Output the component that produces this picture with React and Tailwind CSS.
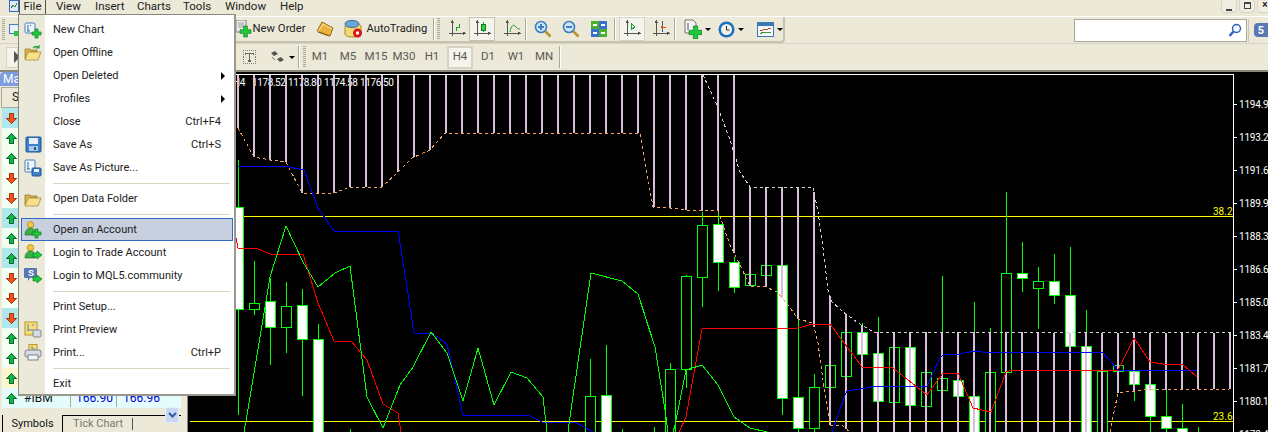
import React from "react";

const F = { fontFamily: 'Roboto,"Noto Sans",sans-serif' };

const Up = () => (
  <svg width="11" height="11" viewBox="0 0 11 11" shapeRendering="crispEdges"><path d="M5.5 .5 10.5 5.5H7.5V10.5H3.5V5.5H.5Z" fill="#16b24a" stroke="#0b6b2c" /></svg>
);
const Down = () => (
  <svg width="11" height="11" viewBox="0 0 11 11" shapeRendering="crispEdges"><path d="M5.5 10.5 10.5 5.5H7.5V.5H3.5V5.5H.5Z" fill="#f2531f" stroke="#a93412" /></svg>
);
const Plus = ({ x = 8, y = 8, s = 8 }) => {
  const a = s / 3;
  return <path d={`M${x + a} ${y}h${a}v${a}h${a}v${a}h${-a}v${a}h${-a}v${-a}h${-a}v${-a}h${a}z`} fill="#22c83c" stroke="#0f7d25" strokeWidth=".7" />;
};
const Sv = ({ w = 18, h = 18, children, vb }) => <svg width={w} height={h} viewBox={vb || `0 0 ${w} ${h}`}>{children}</svg>;

const IcNewChart = () => (
  <Sv><rect x="1" y="2" width="10" height="10" rx="1.5" fill="#eef4fb" stroke="#4a7cb8" /><path d="M4 4v6M6 10H3M7 4l-1 1" stroke="#2a6a9a" fill="none" /><Plus x={8} y={8} s={9} /></Sv>
);
const IcFolderOpen = ({ arrow }) => (
  <Sv>
    <path d="M1 5h5l1 1h6v2H5L2 15H1z" fill="#d9b64a" stroke="#8a6d1e" strokeWidth=".7" />
    <path d="M4 8h13l-3 8H1z" fill="#f8e08a" stroke="#a5832c" strokeWidth=".7" />
    {arrow && <path d="M9 4c2-2 4-2 6 0M15 1v3h-3" stroke="#2a9a3a" strokeWidth="1.2" fill="none" />}
  </Sv>
);
const IcFloppy = () => (
  <Sv w={17} h={17}><rect x="1" y="1" width="15" height="15" rx="1" fill="#3d7fc9" stroke="#1f558f" /><rect x="4" y="2" width="9" height="6" fill="#e8eef6" /><rect x="4" y="10" width="9" height="5" fill="#a9c6e6" /><rect x="9" y="11" width="2" height="3" fill="#1f558f" /></Sv>
);
const IcSavePic = () => (
  <Sv><rect x="1" y="1" width="10" height="12" rx="1" fill="#eef4fb" stroke="#4a7cb8" /><path d="M4 3v7M6 10H3" stroke="#2a6a9a" fill="none" /><rect x="8" y="9" width="9" height="8" rx="1" fill="#3d7fc9" stroke="#1f558f" /><rect x="10" y="10" width="5" height="3" fill="#e8eef6" /></Sv>
);
const IcUser = ({ kind }) => (
  <Sv w={18} h={18}>
    <circle cx="6.5" cy="3.8" r="3.2" fill="#f4c93f" stroke="#a57d16" strokeWidth=".7" />
    <path d="M1 14c0-5 3-7 5.500-7s5 2 5 7z" fill="#3dae45" stroke="#1e7a2c" strokeWidth=".7" />
    {kind === "plus" ? <Plus x={8} y={8} s={9} /> : <path d="M9 9h4V7l5 4-5 4v-2H9z" fill="#22c83c" stroke="#0f7d25" strokeWidth=".7" />}
  </Sv>
);
const IcMql = () => (
  <Sv w={18} h={18}>
    <path d="M1 1h11a1 1 0 0 1 1 1v8a1 1 0 0 1-1 1H6l-2 3v-3H1a1 1 0 0 1-1-1V2a1 1 0 0 1 1-1z" fill="#5a78b4" />
    <text x="4" y="9" fontSize="9" fontWeight="700" fill="#fff" fontFamily="Liberation Sans">S</text>
    <path d="M9 10h4V8l5 4-5 4v-2H9z" fill="#22c83c" stroke="#0f7d25" strokeWidth=".7" />
  </Sv>
);
const IcPreview = () => (
  <Sv><rect x="1" y="1" width="12" height="13" fill="#f8dc78" stroke="#b8962c" /><path d="M4 3v7M4 9h6M8 4h2" stroke="#5a88b8" fill="none" /><rect x="9" y="9" width="8" height="7" rx="1.500" fill="#d8dce2" stroke="#7b8490" /></Sv>
);
const IcPrint = () => (
  <Sv><rect x="5" y="0.500" width="8" height="7" fill="#f8dc78" stroke="#b8962c" /><path d="M8 2v3h3" stroke="#5a88b8" fill="none" /><rect x="1" y="6" width="16" height="7" rx="2" fill="#d8dce2" stroke="#7b8490" /><rect x="4" y="11" width="10" height="5" fill="#f4f4f4" stroke="#7b8490" /></Sv>
);

const Axes = ({ children }) => (
  <svg width="18" height="18" viewBox="0 0 18 18" shapeRendering="crispEdges">
    <path d="M4.500 1v15M1 13.500h16M3 3l1.500-2L6 3M15 12l2 1.500-2 1.500" stroke="#555" fill="none" />
    {children}
  </svg>
);
const Glass = ({ plus }) => (
  <svg width="18" height="18" viewBox="0 0 18 18">
    <path d="M11 11l5.500 5.500" stroke="#b8942c" strokeWidth="2.500" />
    <circle cx="7" cy="7" r="5.500" fill="#cfe6f8" stroke="#3b7fbe" strokeWidth="1.600" />
    <path d={plus ? "M4 7h6M7 4v6" : "M4 7h6"} stroke="#3b7fbe" strokeWidth="2" />
  </svg>
);
const Tile = () => (
  <svg width="16" height="16" viewBox="0 0 16 16" shapeRendering="crispEdges">
    <rect width="8" height="8" fill="#4caf30" /><rect x="8" width="8" height="8" fill="#3a6fd0" /><rect y="8" width="8" height="8" fill="#3a6fd0" /><rect x="8" y="8" width="8" height="8" fill="#4caf30" />
    <path d="M2 4h4M10 4h4M2 12h4M10 12h4" stroke="#fff" strokeWidth="2" />
  </svg>
);
const Caret = () => <span className="ml-[3px] w-0 h-0 border-x-[3px] border-x-transparent border-t-[3px] border-t-black" />;
const Sep = () => <div className="w-px h-[22px] bg-[#aca899] border-r border-white box-content" />;
const Grip = () => <div className="w-[3px] h-[22px] bg-[repeating-linear-gradient(to_bottom,#aca899_0,#aca899_1px,transparent_1px,transparent_2px)]" />;

function Toolbar1() {
  return (
    <div className="h-[27px] flex items-center relative border-t border-t-white">
      <div className="flex items-center pl-[2px] w-[235px]">
        <Grip />
        <div className="ml-[4px]"><svg width="12" height="12"><rect x=".5" y=".5" width="10" height="9" fill="#e8f0fa" stroke="#4a7cb8" /><rect x="5" y="7" width="7" height="5" fill="#22c83c" /></svg></div>
      </div>
      <div className="h-[26px] flex items-center w-[552px] border-r-2 border-b-2 border-[#c5c2b0] rounded-br-sm">
        <svg width="17" height="18" viewBox="0 0 17 18"><rect x="1" y="0" width="10" height="12" fill="#f0f0f0" stroke="#777" /><path d="M3 3h6M3 5h6M3 7h6" stroke="#999" /><Plus x={5} y={6} s={11} /></svg>
        <span className="ml-[1px] text-[11.3px] text-[#222] w-[63px]">New Order</span>
        <svg width="18" height="16" viewBox="0 0 18 16"><path d="M1 10 6 1l11 6-3 8z" fill="#e8b23c" stroke="#9a6a14" /><path d="M2 11l5-8 9 5" fill="none" stroke="#f8e8a0" /><path d="M2 11l11 4" stroke="#8a5a14" /></svg>
        <span className="w-[10px]" />
        <svg width="19" height="20" viewBox="0 0 19 20"><path d="M1 8c0-3 4-4 8-4s8 1 8 4v7c0 2-4 3-8 3s-8-1-8-3z" fill="#f4d870" stroke="#a58a2c" /><ellipse cx="8" cy="5" rx="7" ry="3.500" fill="#6aa6d8" stroke="#33689c" /><circle cx="13.500" cy="14" r="4.500" fill="#d81818" /><rect x="12" y="12.500" width="3" height="3" fill="#fff" /></svg>
        <span className="ml-[4px] text-[11.2px] text-[#222] w-[60px]">AutoTrading</span>
        <span className="w-[6px]" /><Sep /><span className="w-[2px]" /><Grip />
        <span className="w-[8px]" />
        <Axes><path d="M8 11V7h3V4" stroke="#16a02c" fill="none" /></Axes>
        <div className="ml-[3px] w-[26px] h-[24px] flex items-center justify-center bg-[#f4f3ec] border border-white outline outline-1 outline-[#c5c2b0] -outline-offset-1">
          <Axes><path d="M10.500 2v10" stroke="#16a02c" /><rect x="8.500" y="4.500" width="4" height="6" fill="#2fd24a" stroke="#0f7d25" /></Axes>
        </div>
        <span className="w-[8px]" />
        <Axes><path d="M7 12C8 6 10 4 12 6s3 3 5 3" stroke="#16a02c" fill="none" shapeRendering="auto" /></Axes>
        <span className="w-[4px]" /><Sep /><span className="w-[7px]" />
        <Glass plus /><span className="w-[10px]" /><Glass /><span className="w-[11px]" /><Tile />
        <span className="w-[7px]" /><Sep /><span className="w-[3px]" />
        <div className="w-[26px] h-[24px] flex items-center justify-center bg-[#f4f3ec] border border-[#d6d3c4]">
          <Axes><path d="M8 3v7l4-3z" fill="none" stroke="#16a02c" /></Axes>
        </div>
        <span className="w-[7px]" />
        <Axes><path d="M10.500 1v11" stroke="#2a5a9a" /><path d="M14 7h-5M11 5 9 7l2 2" stroke="#d84a14" fill="none" /></Axes>
        <span className="w-[4px]" /><Sep /><span className="w-[8px]" />
        <svg width="18" height="20" viewBox="0 0 18 20"><path d="M1 1h8l3 3v10H1z" fill="#f4f4f4" stroke="#777" /><path d="M4 4v7" stroke="#555" /><Plus x={5} y={7} s={13} /></svg>
        <Caret /><span className="w-[7px]" />
        <svg width="17" height="17" viewBox="0 0 17 17"><circle cx="8.500" cy="8.500" r="8" fill="#1b6fc0" /><circle cx="8.500" cy="8.500" r="5.500" fill="#f2f2ea" /><path d="M8.500 5v4h3" stroke="#333" fill="none" /></svg>
        <Caret /><span className="w-[13px]" />
        <svg width="17" height="15" viewBox="0 0 17 15" shapeRendering="crispEdges"><rect width="16" height="14" x=".5" y=".5" fill="#f4f8fc" stroke="#3c78b4" /><rect x="1" y="1" width="15" height="3" fill="#3c78b4" /><path d="M3 12l3-2 2 1 3-1 3 1" stroke="#3a9a3a" fill="none" /><path d="M3 8h3l2-1h3l3-1" stroke="#b84a14" fill="none" /></svg>
        <Caret />
      </div>
      <div className="ml-[289px] w-[173px] h-[23px] bg-white border border-[#aca899] flex items-center justify-end pr-[4px]">
        <svg width="14" height="15" viewBox="0 0 14 15"><circle cx="8.500" cy="5.500" r="4" fill="#f4f8ff" stroke="#2f62c0" strokeWidth="1.500" /><path d="M5.500 8.500 1.500 13" stroke="#2f62c0" strokeWidth="2.500" /></svg>
      </div>
      <div className="ml-[1px] pl-[5px] border-l border-[#c9c6b6] h-[23px] flex items-center">
        <div className="w-[14px] h-[14px] bg-[#5a78b4] rounded-l-sm text-white text-[11px] font-bold flex items-center justify-center leading-none">5</div>
      </div>
    </div>
  );
}

function Toolbar2() {
  const tf = ["M1", "M5", "M15", "M30", "H1", "H4", "D1", "W1", "MN"];
  return (
    <div className="h-[27px] flex items-center border-t border-[#d6d3c4]">
      <div className="w-[243px] pl-[6px]"><div className="w-[12px] h-[21px] bg-[#f4f3ec] border border-[#d6d3c4] flex items-center"><div className="ml-[7px] w-0 h-0 border-y-[6px] border-y-transparent border-l-[6px] border-l-[#555]" /></div></div>
      <svg width="13" height="14" viewBox="0 0 14 14" shapeRendering="crispEdges"><rect x=".5" y=".5" width="13" height="13" fill="none" stroke="#777" strokeDasharray="1 1" /><path d="M3 3h8v2M7 3v9M5 11.500h4M3 3v2" stroke="#666" fill="none" strokeWidth="1.500" /></svg>
      <span className="w-[14px]" />
      <svg width="16" height="14" viewBox="0 0 16 14"><path d="M1 3l4-2 3 3-4 2zM7 9l4-2 3 3-4 2z" fill="#555" /><path d="M2 7l3 3" stroke="#777" /></svg>
      <Caret />
      <span className="w-[3px]" /><Sep /><span className="w-[3px]" /><Grip />
      <div className="flex items-center text-[11.5px] text-[#5a5a52]">
        {tf.map((t) => (
          <div key={t} className={t === "H4" ? "mx-[1px] w-[26px] h-[23px] flex items-center justify-center bg-[#f4f3ec] border-2 border-[#d6d3c4]" : "w-[28px] h-[23px] flex items-center justify-center"}>{t}</div>
        ))}
      </div>
      <span className="w-[1px]" /><Sep />
    </div>
  );
}

const rows = [
  ["d", "#aee8ea"], ["u", "#f0fff0"], ["u", "#f2fff2"], ["d", "#f2fff2"], ["d", "#f2fff2"], ["u", "#aee8ea"], ["u", "#f0fff0"], ["u", "#aee8ea"], ["d", "#f2fff2"], ["d", "#f2fff2"], ["d", "#aee8ea"], ["u", "#f2fff2"], ["u", "#f2fff2"], ["u", "#fdf7d0"], ["u", "#e4fcfc"],
];

function LeftPanel() {
  return (
    <div className="w-[187px] shrink-0 flex flex-col h-full">
      <div className="h-[14px] bg-[#7d9be0] text-white text-[12px] leading-[14px] pl-[3px] rounded-tl-sm">Ma</div>
      <div className="ml-[1px] mt-[1px] w-[180px] h-[21px] border border-[#aca899] bg-[#ece9d8] text-[12px] pl-[10px] text-[#222] leading-[19px]">S</div>
      <div className="ml-[2px] w-[179px] relative flex flex-col">
        {rows.map(([d, c], i) => (
          <div key={i} className="h-[20px] shrink-0 flex items-center text-[12px] text-[#0000e0]" style={{ backgroundColor: c }}>
            <span className="ml-[4px] w-[12px] flex">{d === "u" ? <Up /> : <Down />}</span>
            {i === 14 && (
              <>
                <span className="ml-[6px] w-[47px] text-[#111] border-r border-[#aca899]">#IBM</span>
                <span className="w-[46px] text-right pr-[3px] border-r border-[#aca899]">166.90</span>
                <span className="w-[46px] text-right pr-[3px]">166.96</span>
              </>
            )}
          </div>
        ))}
        <div className="absolute right-[2px] bottom-[-15px] w-[14px] h-[16px] bg-[#c8d8f4] border border-[#e8eefc] flex items-center justify-center">
          <svg width="9" height="7" viewBox="0 0 9 7"><path d="M1 1l3.500 3.500L8 1" fill="none" stroke="#3a5a9a" strokeWidth="2" /></svg>
        </div>
      </div>
      <div className="mt-auto ml-[2px] h-[17px] flex text-[11px] border-t border-black w-[179px]">
        <div className="w-[61px] text-center bg-[#ece9d8] text-[#111] border-l border-r border-black -mt-px leading-[17px]">Symbols</div>
        <div className="pl-[10px] mt-[2px] w-[70px] text-[#7a7a70] border-r border-[#555] leading-[12px] h-[12px]">Tick Chart</div>
      </div>
    </div>
  );
}

const candles = [
  [238, 160, 415, 207, 309, 1], [254, 261, 315, 303, 309, 0], [270, 278, 365, 301, 327, 1], [286, 282, 353, 306, 327, 0], [302, 289, 396, 305, 339, 1], [318, 324, 440, 339, 440, 1],
  [350, 429, 440, 440, 440, 0], [590, 359, 440, 396, 440, 0], [606, 345, 440, 395, 440, 1], [622, 429, 440, 440, 440, 0], [654, 427, 440, 440, 440, 0], [670, 363, 440, 369, 440, 0],
  [686, 275, 388, 276, 369, 0], [702, 212, 307, 225, 277, 0], [718, 212, 291, 224, 262, 1], [734, 257, 293, 262, 287, 1], [750, 274, 285, 274, 285, 0], [766, 265, 275, 265, 275, 0],
  [782, 265, 415, 265, 398, 1], [798, 320, 440, 397, 428, 1], [814, 374, 440, 387, 428, 0], [830, 365, 387, 365, 387, 0], [846, 332, 376, 332, 376, 0], [862, 323, 354, 332, 354, 1],
  [878, 317, 401, 353, 401, 1], [894, 347, 402, 347, 402, 0], [910, 347, 405, 347, 405, 1], [926, 372, 406, 372, 406, 0], [942, 276, 390, 378, 390, 0], [958, 380, 396, 380, 396, 1],
  [974, 302, 440, 396, 440, 1], [990, 328, 440, 372, 440, 0], [1006, 192, 372, 273, 372, 0], [1022, 242, 292, 273, 278, 1], [1038, 267, 329, 281, 288, 0], [1054, 254, 304, 281, 295, 1],
  [1070, 247, 346, 295, 346, 1], [1086, 310, 440, 346, 440, 1], [1102, 371, 440, 371, 440, 0], [1118, 365, 371, 365, 371, 0], [1134, 371, 401, 371, 384, 1], [1150, 384, 440, 384, 416, 1],
  [1166, 390, 440, 416, 428, 1], [1182, 404, 440, 428, 440, 1], [1198, 427, 440, 440, 440, 0],
];
const orange = [[238,128],[254,157],[270,160],[286,162],[302,193],[318,194],[334,193],[350,187],[382,187],[398,172],[412,158],[430,150],[445,133],[640,133],[653,207],[670,208],[686,210],[718,211],[723,225],[730,245],[740,265],[750,286],[766,287],[777,292],[788,305],[798,319],[813,323],[818,343],[823,380],[830,425],[843,426],[850,432]];
const orange2 = [[1110,432],[1113,417],[1118,393],[1143,390],[1230,389]];
const pale = [[703,75],[717,105],[730,140],[740,172],[750,187],[813,187],[818,212],[823,248],[828,290],[832,302],[843,312],[857,322],[873,332],[1232,333]];
const blue = [[238,166],[285,166],[304,170],[318,208],[334,231],[398,231],[407,287],[414,333],[432,333],[447,344],[463,415],[528,415],[542,422],[575,422],[593,432]];
const blue2 = [[832,432],[845,395],[847,391],[860,389],[877,386],[927,386],[940,358],[943,355],[960,354],[973,351],[983,352],[1102,352],[1118,370],[1197,370]];
const red = [[236,238],[238,248],[256,248],[270,254],[303,254],[318,303],[334,341],[351,341],[367,360],[383,404],[398,413],[401,432]];
const red2 = [[679,432],[686,417],[702,329],[798,328],[813,324],[830,324],[862,367],[893,368],[927,395],[943,373],[958,373],[973,408],[991,412],[1006,372],[1012,370],[1118,370],[1134,338],[1150,362],[1163,364],[1182,364],[1197,377]];
const green = [[244,432],[247,415],[270,277],[286,226],[303,262],[318,287],[335,273],[350,266],[367,397],[383,428],[400,385],[413,367],[431,332],[447,353],[463,401],[478,348],[494,405],[511,372],[527,378],[543,397],[547,432]];
const green2 = [[568,432],[570,417],[591,273],[622,281],[638,294],[650,332]];
const green3 = [[640,300],[655,347],[665,410],[668,432]];
const green4 = [[673,432],[675,425],[686,370],[702,365],[718,385],[734,417],[750,428],[767,432]];
const pts = (a) => a.map(([x, y]) => `${x},${y}`).join(" ");
const bars = [];
for (let x = 238; x <= 1230; x += 16) {
  const yAt = (arr) => {
    for (let i = 0; i < arr.length - 1; i++) if (x >= arr[i][0] && x <= arr[i + 1][0]) { const [a, b] = [arr[i], arr[i + 1]]; return a[1] + ((b[1] - a[1]) * (x - a[0])) / (b[0] - a[0]); }
    return null;
  };
  let top = x <= 718 ? 75 : yAt(pale);
  if (x === 734) top = 75;
  let bot = x <= 850 ? yAt(orange) : x >= 1118 ? yAt(orange2) : 432;
  if (bot == null) bot = 432;
  bars.push([x, top, bot]);
}
const prices = ["1194.90", "1193.25", "1191.60", "1189.95", "1188.30", "1186.65", "1185.00", "1183.40", "1181.75", "1180.10", "1178.45"];

function Chart() {
  return (
    <div className="flex-1 h-full bg-black">
      <svg width="1080" height="360" viewBox="188 72 1080 360" shapeRendering="crispEdges" className="block" style={F}>
        <path d="M188 74.500H1233.500V433" stroke="#fff" fill="none" />
        {[["H4", 233], ["1178.52", 252], ["1178.80", 288], ["1174.58", 324], ["1176.50", 360]].map(([t, x]) => (
          <text key={t} x={x} y="86" fontSize="10" letterSpacing="-0.4" fill="#fff">{t}</text>
        ))}
        <path d="M190 216.500H1233M190 421.500H1233" stroke="#ffff00" />
        <text x="1213" y="215" fontSize="10" fill="#ffff00">38.2</text>
        <text x="1213" y="420" fontSize="10" fill="#ffff00">23.6</text>
        {candles.map(([x, wt, wb, bt, bb, fill]) => (
          <g key={x}>
            <path d={`M${x + 0.5} ${wt}V${wb}`} stroke="#00ff00" />
            {bb > bt && <rect x={x - 5 + 0.5} y={bt + 0.5} width={10} height={bb - bt} fill={fill ? "#fff" : "#000"} stroke="#00ff00" />}
          </g>
        ))}
        {bars.map(([x, t, b]) => <rect key={x} x={x - 1} y={t} width="2" height={b - t} fill="#d8bfd8" />)}
        <polyline points={pts(orange)} fill="none" stroke="#f4a460" strokeDasharray="3 3" />
        <polyline points={pts(orange2)} fill="none" stroke="#f4a460" strokeDasharray="3 3" />
        <polyline points={pts(pale)} fill="none" stroke="#d8d0d8" strokeDasharray="3 3" />
        {[blue, blue2].map((l, i) => <polyline key={i} points={pts(l)} fill="none" stroke="#0000ff" />)}
        {[red, red2].map((l, i) => <polyline key={i} points={pts(l)} fill="none" stroke="#ff0000" />)}
        {[green, green2, green3, green4].map((l, i) => <polyline key={i} points={pts(l)} fill="none" stroke="#00ff00" />)}
        {prices.map((p, i) => (
          <g key={p}>
            <path d={`M1234 ${104 + i * 33}h3`} stroke="#fff" />
            <text x="1239" y={108 + i * 33} fontSize="10" letterSpacing="-0.2" fill="#fff">{p}</text>
          </g>
        ))}
      </svg>
    </div>
  );
}

const Sub = () => <span className="ml-auto mr-[8px] w-0 h-0 border-y-[4px] border-y-transparent border-l-[4px] border-l-black" />;
const Item = ({ icon, label, sc, sub, active }) => (
  <div className={active ? "h-[23px] flex items-center bg-[#c8d0e0] border border-[#316ac5] relative" : "h-[23px] flex items-center relative"}>
    <span className={active ? "w-[24px] mr-[8px] flex items-center justify-center shrink-0 -ml-[1px]" : "w-[24px] mr-[8px] flex items-center justify-center shrink-0"}>{icon}</span>
    <span className="text-[#222] pt-[2px]">{label}</span>
    {sc && <span className="ml-auto mr-[12px] text-[#222] pt-[2px]">{sc}</span>}
    {sub && <Sub />}
  </div>
);
const MSep = () => <div className="h-[8px] flex items-center pl-[32px] pr-[3px]"><div className="h-px w-full bg-[#d8d5c4]" /></div>;

function FileMenu() {
  return (
    <div className="absolute left-[18px] top-[14px] w-[218px] h-[382px] bg-white border border-[#8a887c] border-r-2 border-b-2 border-r-[#9a988c] border-b-[#9a988c] text-[11px] pl-[2px] pr-[1px] pt-[3px] bg-[linear-gradient(to_right,#ebe9d9_26px,#fff_26px)]">
      <Item icon={<IcNewChart />} label="New Chart" />
      <Item icon={<IcFolderOpen arrow />} label="Open Offline" />
      <Item label="Open Deleted" sub />
      <Item label="Profiles" sub />
      <Item label="Close" sc="Ctrl+F4" />
      <Item icon={<IcFloppy />} label="Save As" sc="Ctrl+S" />
      <Item icon={<IcSavePic />} label="Save As Picture..." />
      <MSep />
      <Item icon={<IcFolderOpen />} label="Open Data Folder" />
      <MSep />
      <Item icon={<IcUser kind="plus" />} label="Open an Account" active />
      <Item icon={<IcUser />} label="Login to Trade Account" />
      <Item icon={<IcMql />} label="Login to MQL5.community" />
      <MSep />
      <Item label="Print Setup..." />
      <Item icon={<IcPreview />} label="Print Preview" />
      <Item icon={<IcPrint />} label="Print..." sc="Ctrl+P" />
      <MSep />
      <Item label="Exit" />
    </div>
  );
}

export default function App() {
  const menus = [["View", 39], ["Insert", 42], ["Charts", 46], ["Tools", 42], ["Window", 55], ["Help", 40]];
  return (
    <div className="relative w-[1268px] h-[432px] overflow-hidden bg-[#ece9d8] flex flex-col" style={F}>
      <div className="h-[16px] shrink-0 flex items-start text-[11.5px] leading-[12px] text-[#222] relative">
        <div className="w-[19px] pl-[9px]"><svg width="10" height="12" viewBox="0 0 10 12" shapeRendering="crispEdges"><rect x=".5" y="0" width="9" height="11" fill="#dfe9fa" stroke="#3a6ac0" /><path d="M2 8l2-3 2 2 2-4" stroke="#3a8a3a" fill="none" /></svg></div>
        <div className="w-[27px] h-[15px] border-x border-b border-x-[#55534a] border-b-[#55534a] text-center">File</div>
        <div className="flex pl-[10px]">{menus.map(([m, w]) => <span key={m} style={{ width: w }}>{m}</span>)}</div>
        <div className="ml-auto flex gap-[2px] -mr-[5px] -mt-[2px]">
          <div className="w-[16px] h-[15px] bg-[#f0eee2] border border-[#d6d3c4] rounded-sm flex items-end justify-center pb-[1px]"><div className="w-[6px] h-[2px] bg-[#444]" /></div>
          <div className="w-[16px] h-[15px] bg-[#f0eee2] border border-[#d6d3c4] rounded-sm flex items-center justify-center"><div className="w-[7px] h-[7px] border border-[#444] border-t-2" /></div>
          <div className="w-[16px] h-[15px] bg-[#f0eee2] border border-[#d6d3c4] rounded-sm text-[10px] font-bold text-center leading-[12px]">×</div>
        </div>
      </div>
      <Toolbar1 />
      <Toolbar2 />
      <div className="h-[2px] shrink-0 bg-[#8a887c]" />
      <div className="flex-1 flex min-h-0">
        <LeftPanel />
        <div className="w-px bg-[#8a887c]" />
        <Chart />
      </div>
      <FileMenu />
    </div>
  );
}
